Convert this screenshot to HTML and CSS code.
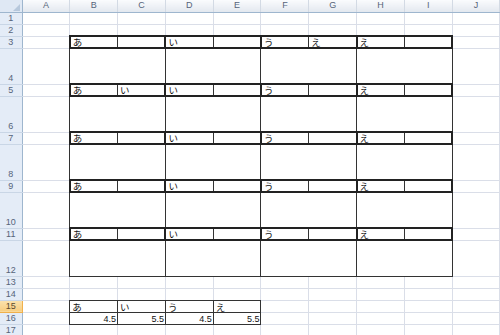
FILE: index.html
```html
<!DOCTYPE html>
<html lang="ja">
<head>
  <meta charset="UTF-8" />
  <title>Sheet1</title>
  <link rel="stylesheet" href="styles.css">
</head>
<body>
  <table class="sheet">
    <colgroup>
      <col class="col-head">
      <col class="col"><col class="col"><col class="col"><col class="col"><col class="col">
      <col class="col"><col class="col"><col class="col"><col class="col"><col class="col">
    </colgroup>
    <tr class="head-row">
      <th class="corner"><span class="tri"></span></th>
      <th>A</th><th>B</th><th>C</th><th>D</th><th>E</th>
      <th>F</th><th>G</th><th>H</th><th>I</th><th>J</th>
    </tr>
    <tr><th>1</th><td></td><td></td><td></td><td></td><td></td><td></td><td></td><td></td><td></td><td></td></tr>
    <tr><th>2</th><td></td><td></td><td></td><td></td><td></td><td></td><td></td><td></td><td></td><td></td></tr>

    <tr><th>3</th><td></td>
      <td class="hd l">あ</td><td class="hd r"></td>
      <td class="hd l">い</td><td class="hd r"></td>
      <td class="hd l">う</td><td class="hd r">え</td>
      <td class="hd l">え</td><td class="hd r"></td>
      <td></td></tr>
    <tr class="tall"><th>4</th><td></td>
      <td class="big" colspan="2"></td><td class="big" colspan="2"></td>
      <td class="big" colspan="2"></td><td class="big" colspan="2"></td>
      <td></td></tr>

    <tr><th>5</th><td></td>
      <td class="hd l">あ</td><td class="hd r">い</td>
      <td class="hd l">い</td><td class="hd r"></td>
      <td class="hd l">う</td><td class="hd r"></td>
      <td class="hd l">え</td><td class="hd r"></td>
      <td></td></tr>
    <tr class="tall"><th>6</th><td></td>
      <td class="big" colspan="2"></td><td class="big" colspan="2"></td>
      <td class="big" colspan="2"></td><td class="big" colspan="2"></td>
      <td></td></tr>

    <tr><th>7</th><td></td>
      <td class="hd l">あ</td><td class="hd r"></td>
      <td class="hd l">い</td><td class="hd r"></td>
      <td class="hd l">う</td><td class="hd r"></td>
      <td class="hd l">え</td><td class="hd r"></td>
      <td></td></tr>
    <tr class="tall"><th>8</th><td></td>
      <td class="big" colspan="2"></td><td class="big" colspan="2"></td>
      <td class="big" colspan="2"></td><td class="big" colspan="2"></td>
      <td></td></tr>

    <tr><th>9</th><td></td>
      <td class="hd l">あ</td><td class="hd r"></td>
      <td class="hd l">い</td><td class="hd r"></td>
      <td class="hd l">う</td><td class="hd r"></td>
      <td class="hd l">え</td><td class="hd r"></td>
      <td></td></tr>
    <tr class="tall"><th>10</th><td></td>
      <td class="big" colspan="2"></td><td class="big" colspan="2"></td>
      <td class="big" colspan="2"></td><td class="big" colspan="2"></td>
      <td></td></tr>

    <tr><th>11</th><td></td>
      <td class="hd l">あ</td><td class="hd r"></td>
      <td class="hd l">い</td><td class="hd r"></td>
      <td class="hd l">う</td><td class="hd r"></td>
      <td class="hd l">え</td><td class="hd r"></td>
      <td></td></tr>
    <tr class="tall"><th>12</th><td></td>
      <td class="big last" colspan="2"></td><td class="big last" colspan="2"></td>
      <td class="big last" colspan="2"></td><td class="big last" colspan="2"></td>
      <td></td></tr>

    <tr><th>13</th><td></td><td></td><td></td><td></td><td></td><td></td><td></td><td></td><td></td><td></td></tr>
    <tr><th>14</th><td></td><td></td><td></td><td></td><td></td><td></td><td></td><td></td><td></td><td></td></tr>
    <tr><th class="sel">15</th><td></td>
      <td class="box">あ</td><td class="box">い</td><td class="box">う</td><td class="box">え</td>
      <td></td><td></td><td></td><td></td><td></td></tr>
    <tr><th>16</th><td></td>
      <td class="box num">4.5</td><td class="box num">5.5</td><td class="box num">4.5</td><td class="box num">5.5</td>
      <td></td><td></td><td></td><td></td><td></td></tr>
    <tr><th>17</th><td></td><td></td><td></td><td></td><td></td><td></td><td></td><td></td><td></td><td></td></tr>
  </table>
</body>
</html>
```

FILE: styles.css
```css
body {
  margin: 0;
  background: white;
  overflow: hidden;
}
.sheet {
  border-collapse: collapse;
  table-layout: fixed;
  width: 500px;
  font-family: "Noto Sans CJK JP", sans-serif;
  font-size: 9.5px;
  color: #111;
}
/* grid lines live on cols and rows so any cell border wins over them */
.col-head {
  width: 22px;
}
.col {
  width: 47.8px;
  border-right: 1px solid #dadee8;
}
.sheet tr {
  height: 12px;
  border-bottom: 1px solid #dadee8;
}
.sheet tr.tall {
  height: 36px;
}
.sheet td {
  padding: 0 1px 0 2px;
  line-height: 9px;
  vertical-align: bottom;
  white-space: nowrap;
}
.sheet th {
  padding: 0 0 1px;
  font-family: "Liberation Sans", sans-serif;
  font-size: 9px;
  font-weight: normal;
  line-height: 9px;
  color: #56647a;
  background: #e4ecf7;
  border-right: 1px solid #9eb6ce;
  border-bottom: 1px solid #c9d6e6;
  vertical-align: bottom;
  text-align: center;
}
.head-row th {
  height: 11px;
  padding: 0;
  vertical-align: middle;
  background: linear-gradient(#fafbfd, #e3e8ef);
  border-right: 1px solid #d3dae4;
  border-bottom: 1px solid #9eb6ce;
}
.head-row th.corner {
  position: relative;
  background: #dfe8f4;
  border-right: 1px solid #9eb6ce;
}
.tri {
  position: absolute;
  right: 2px;
  bottom: 1px;
  width: 0;
  height: 0;
  border-left: 7px solid transparent;
  border-bottom: 7px solid #b7c8dc;
}
.sheet th.sel {
  background: linear-gradient(#fbe3ae, #f6cd80);
  border-bottom: 1px solid #f0b04c;
  border-right: 1px solid #f0b04c;
  color: #5a4a30;
}
.hd {
  border-top: 2px solid #222;
  border-bottom: 2px solid #222;
}
.hd.l {
  border-left: 2px solid #222;
  border-right: 1px solid #333;
}
.hd.r {
  border-right: 2px solid #222;
}
.big {
  border-left: 1px solid #333;
  border-right: 1px solid #333;
}
.big.last {
  border-bottom: 1px solid #333;
}
.box {
  border: 1px solid #333;
}
.num {
  text-align: right;
  font-family: "Liberation Sans", sans-serif;
  font-size: 9px;
}
```
